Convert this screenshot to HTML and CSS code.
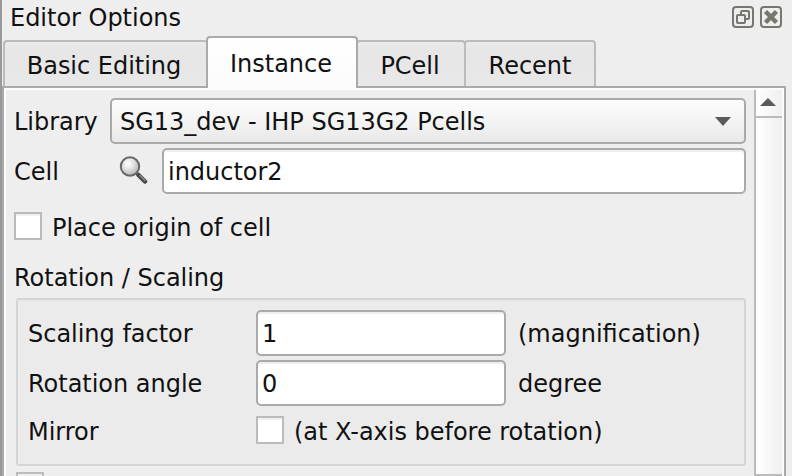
FILE: index.html
```
<!DOCTYPE html>
<html lang="en">
<head>
<meta charset="utf-8">
<title>Editor Options</title>
<link rel="stylesheet" href="styles.css">
</head>
<body>
<div class="dock">
  <header class="titlebar">
    <span class="title">Editor Options</span>
    <svg class="tool" viewBox="0 0 22 22"><rect x="1" y="1" width="20" height="20" rx="3"/><rect x="9" y="5" width="8" height="8" rx="1"/><rect class="front" x="5" y="9" width="8" height="8" rx="1"/></svg>
    <svg class="tool" viewBox="0 0 22 22"><rect x="1" y="1" width="20" height="20" rx="3"/><path class="cross" d="M5.500 5.500l11 11M16.500 5.500l-11 11"/></svg>
  </header>
  <nav class="tabs">
    <div class="tab basic">Basic Editing</div>
    <div class="tab active">Instance</div>
    <div class="tab pcell">PCell</div>
    <div class="tab recent">Recent</div>
  </nav>
  <main class="pane">
    <div class="content">
      <div class="row library">
        <span class="label">Library</span>
        <div class="combo"><span>SG13_dev - IHP SG13G2 Pcells</span><svg class="down" viewBox="0 0 16 9"><path d="M0 0h16L8 9z"/></svg></div>
      </div>
      <div class="row cell">
        <span class="label">Cell</span>
        <svg class="search" viewBox="0 0 30 30">
          <defs><radialGradient id="lens" cx=".4" cy=".35" r=".65"><stop offset="0" stop-color="#fff"/><stop offset=".5" stop-color="#e0e0e0"/><stop offset="1" stop-color="#b4b4b4"/></radialGradient></defs>
          <path d="M18 17l3 3" stroke="#777" stroke-width="2.500"/>
          <path d="M20.500 19l6.500 6.500" stroke="#484848" stroke-width="4.500" stroke-linecap="round"/>
          <path d="M21.500 19l6 6" stroke="#888" stroke-width="1.500"/>
          <circle cx="12" cy="10.500" r="9.200" fill="url(#lens)" stroke="#686868" stroke-width="2"/>
        </svg>
        <div class="input">inductor2</div>
      </div>
      <div class="row origin"><span class="check"></span><span class="text">Place origin of cell</span></div>
      <div class="heading">Rotation / Scaling</div>
      <section class="group">
        <div class="row field"><span class="label">Scaling factor</span><div class="input">1</div><span class="unit">(magnification)</span></div>
        <div class="row field"><span class="label">Rotation angle</span><div class="input">0</div><span class="unit">degree</span></div>
        <div class="row mirror"><span class="label">Mirror</span><span class="check"></span><span class="text">(at X-axis before rotation)</span></div>
      </section>
      <span class="check next"></span>
    </div>
    <aside class="scrollbar">
      <div class="arrow"><svg viewBox="0 0 16 8"><path d="M0 8h16L8 0z"/></svg></div>
      <div class="thumb"></div>
    </aside>
  </main>
</div>
</body>
</html>
```
FILE: styles.css
```
* { box-sizing: border-box; }
body {
  margin: 0;
  background: #eee;
  color: #111;
  font: 24px/28px "DejaVu Sans", sans-serif;
  letter-spacing: -0.02px;
  white-space: nowrap;
}
svg { display: block; flex: none; }
.dock {
  width: 792px;
  height: 476px;
  overflow: hidden;
  border-left: 2px solid #999;
  display: flex;
  flex-direction: column;
}
.titlebar {
  height: 36px;
  flex: none;
  display: flex;
  align-items: flex-start;
  padding: 3px 10px 0 8px;
  gap: 6px;
}
.title { flex: 1; padding-top: 1px; }
.tool { width: 22px; height: 22px; margin-top: 3px; fill: none; stroke: #777770; stroke-width: 2; }
.tool .front { fill: #eee; }
.tool .cross { stroke-width: 4.500; }
.tabs { height: 50px; flex: none; display: flex; align-items: flex-end; }
.tab {
  height: 46px;
  border: 2px solid #bbb;
  border-bottom: 0;
  border-radius: 4px 4px 0 0;
  background: linear-gradient(#ebebeb, #e6e6e6 20%, #e8e8e8);
  padding-top: 10px;
  text-align: center;
}
.basic { width: 205px; margin-left: 1px; border-right: 0; padding-right: 5px; }
.active {
  width: 152px;
  height: 52px;
  margin: 0 -2px -2px -2px;
  padding-top: 12px;
  padding-right: 2px;
  border-color: #aaa;
  background: linear-gradient(#fff, #fbfbfb);
  position: relative;
}
.pcell { width: 110px; padding-right: 2px; }
.recent { width: 132px; margin-left: -2px; }
.pane {
  width: 784px;
  height: 400px;
  flex: none;
  display: flex;
  border: 2px solid #aaa;
  box-shadow: inset 2px 2px #fcfcfc, inset -2px 0 #fcfcfc;
  padding: 2px 2px 0;
}
.content { width: 748px; flex: none; padding: 8px 8px 0; }
.row { display: flex; align-items: center; }
.label { padding-top: 2px; }
.library { height: 46px; margin-bottom: 4px; }
.library .label { width: 96px; }
.combo {
  flex: 1;
  height: 46px;
  border: 2px solid #aaa;
  border-radius: 5px;
  background: linear-gradient(#fdfdfd, #e9e9e9);
  display: flex;
  align-items: center;
  justify-content: space-between;
  padding: 0 13px 0 8px;
}
.combo span { padding-top: 2px; }
.down { width: 16px; height: 9px; fill: #5a5a5a; }
.cell { height: 46px; }
.cell .label { width: 104px; }
.search { width: 30px; height: 30px; margin-right: 14px; }
.input {
  flex: 1;
  height: 46px;
  border: 2px solid #aaa;
  border-radius: 5px;
  background: #fff;
  box-shadow: inset 0 2px #eee;
  padding: 8px 4px 6px;
}
.unit { padding-top: 2px; letter-spacing: 0; }
.check {
  width: 28px;
  height: 28px;
  flex: none;
  background: #fff;
  border: 2px solid #bbb;
  box-shadow: inset 0 2px #f1f1f1;
}
.origin { height: 28px; margin-top: 18px; gap: 10px; }
.text { padding-top: 4px; }
.heading { margin-top: 24px; height: 28px; }
.group {
  height: 168px;
  margin: 6px 0 0 2px;
  border: 2px solid #d5d5d5;
  border-radius: 3px;
  background: #ebebeb;
  box-shadow: inset 0 2px #e8e8e8;
  padding: 10px;
}
.field { height: 46px; margin-bottom: 4px; }
.group .label { width: 228px; }
.field .input { flex: none; width: 250px; margin-right: 12px; }
.mirror { height: 28px; margin-top: 10px; }
.mirror .label { padding-top: 4px; }
.mirror .check { margin-right: 10px; }
.next { display: block; margin: 6px 0 0 2px; }
.scrollbar {
  width: 28px;
  flex: none;
  height: 386px;
  border-left: 2px solid #bbb;
  background: linear-gradient(90deg, #fff, #efefef);
}
.arrow { height: 28px; border-bottom: 2px solid #bbb; padding: 8px 0 0 4px; }
.arrow svg { width: 16px; height: 8px; fill: #5a5a5a; }
.thumb { height: 358px; border-bottom: 2px solid #bbb; }
```
